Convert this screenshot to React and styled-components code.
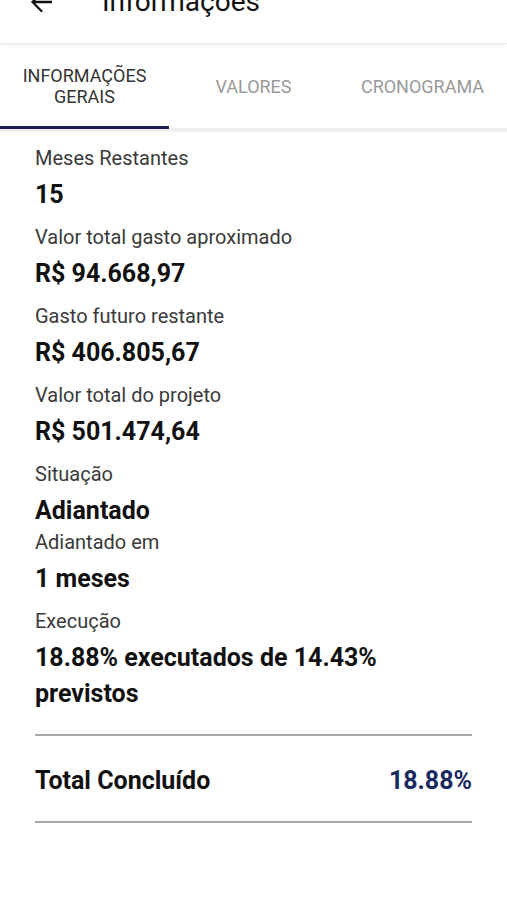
import React from "react";
import styled, { createGlobalStyle } from "styled-components";

const Global = createGlobalStyle`
  html, body { margin: 0; padding: 0; background: #fff; }
  body { font-family: Roboto, "Noto Sans", "Liberation Sans", sans-serif; overflow: hidden; }
`;

const Page = styled.div`
  width: 507px;
  height: 900px;
  background: #fff;
  display: flex;
  flex-direction: column;
  overflow: hidden;
`;

const Header = styled.header`
  height: 43px;
  flex: none;
  display: flex;
  align-items: flex-start;
  gap: 50px;
  padding-left: 30px;
  box-shadow: 0 1px 3px rgba(0, 0, 0, 0.08);
  position: relative;
  z-index: 2;
  border-bottom: 1px solid #ececec;
`;

const BackIcon = styled.svg`
  width: 22px;
  height: 22px;
  margin-top: -9px;
  flex: none;
`;

const Title = styled.h1`
  margin: -12px 0 0;
  font-size: 28px;
  line-height: 28px;
  font-weight: 400;
  color: #111;
`;

const Tabs = styled.nav`
  height: 84px;
  flex: none;
  display: grid;
  grid-template-columns: repeat(3, 1fr);
  border-bottom: 4px solid #efefef;
`;

const Tab = styled.div`
  position: relative;
  display: flex;
  align-items: center;
  justify-content: center;
  text-align: center;
  font-size: 18px;
  line-height: 21px;
  text-transform: uppercase;
  color: ${(p) => (p.$active ? "#333" : "#9a9a9a")};
  &::after {
    content: "";
    display: ${(p) => (p.$active ? "block" : "none")};
    position: absolute;
    left: 0;
    right: 0;
    bottom: -1px;
    height: 3px;
    background: #1b1f52;
  }
`;

const Content = styled.main`
  padding: 14px 35px 0;
  display: flex;
  flex-direction: column;
`;

const Item = styled.div`
  display: flex;
  flex-direction: column;
  margin-top: ${(p) => (p.$tight ? "1px" : "12px")};
  &:first-child { margin-top: 0; }
`;

const Label = styled.div`
  font-size: 20px;
  line-height: 24px;
  color: #3a3a3a;
  margin-bottom: 7px;
`;

const Value = styled.div`
  font-size: 25px;
  line-height: 36px;
  font-weight: 700;
  color: #111;
`;

const Divider = styled.hr`
  border: 0;
  height: 2px;
  background: #a8a8a8;
  margin: ${(p) => (p.$flush ? "0" : "22px 0 0")};
`;

const TotalRow = styled.div`
  box-sizing: border-box;
  display: flex;
  justify-content: space-between;
  align-items: center;
  height: 85px;
  padding-top: 3px;
  font-size: 25px;
  font-weight: 700;
  color: #111;
`;

const Percent = styled.span`
  color: #1a2a5e;
`;

const items = [
  ["Meses Restantes", "15"],
  ["Valor total gasto aproximado", "R$ 94.668,97"],
  ["Gasto futuro restante", "R$ 406.805,67"],
  ["Valor total do projeto", "R$ 501.474,64"],
  ["Situação", "Adiantado"],
  ["Adiantado em", "1 meses", true],
  ["Execução", "18.88% executados de 14.43% previstos"],
];

export default function App() {
  return (
    <Page>
      <Global />
      <Header>
        <BackIcon viewBox="4 4 16 16" fill="#111">
          <path d="M20 11.1H7.83l5.59-5.59L12.3 4.4 4.7 12l7.6 7.6 1.12-1.12-5.59-5.58H20z" />
        </BackIcon>
        <Title>Informações</Title>
      </Header>
      <Tabs>
        <Tab $active>
          Informações
          <br />
          Gerais
        </Tab>
        <Tab>Valores</Tab>
        <Tab>Cronograma</Tab>
      </Tabs>
      <Content>
        {items.map(([l, v, tight]) => (
          <Item key={l} $tight={tight}>
            <Label>{l}</Label>
            <Value>{v}</Value>
          </Item>
        ))}
        <Divider />
        <TotalRow>
          <span>Total Concluído</span>
          <Percent>18.88%</Percent>
        </TotalRow>
        <Divider $flush />
      </Content>
    </Page>
  );
}
